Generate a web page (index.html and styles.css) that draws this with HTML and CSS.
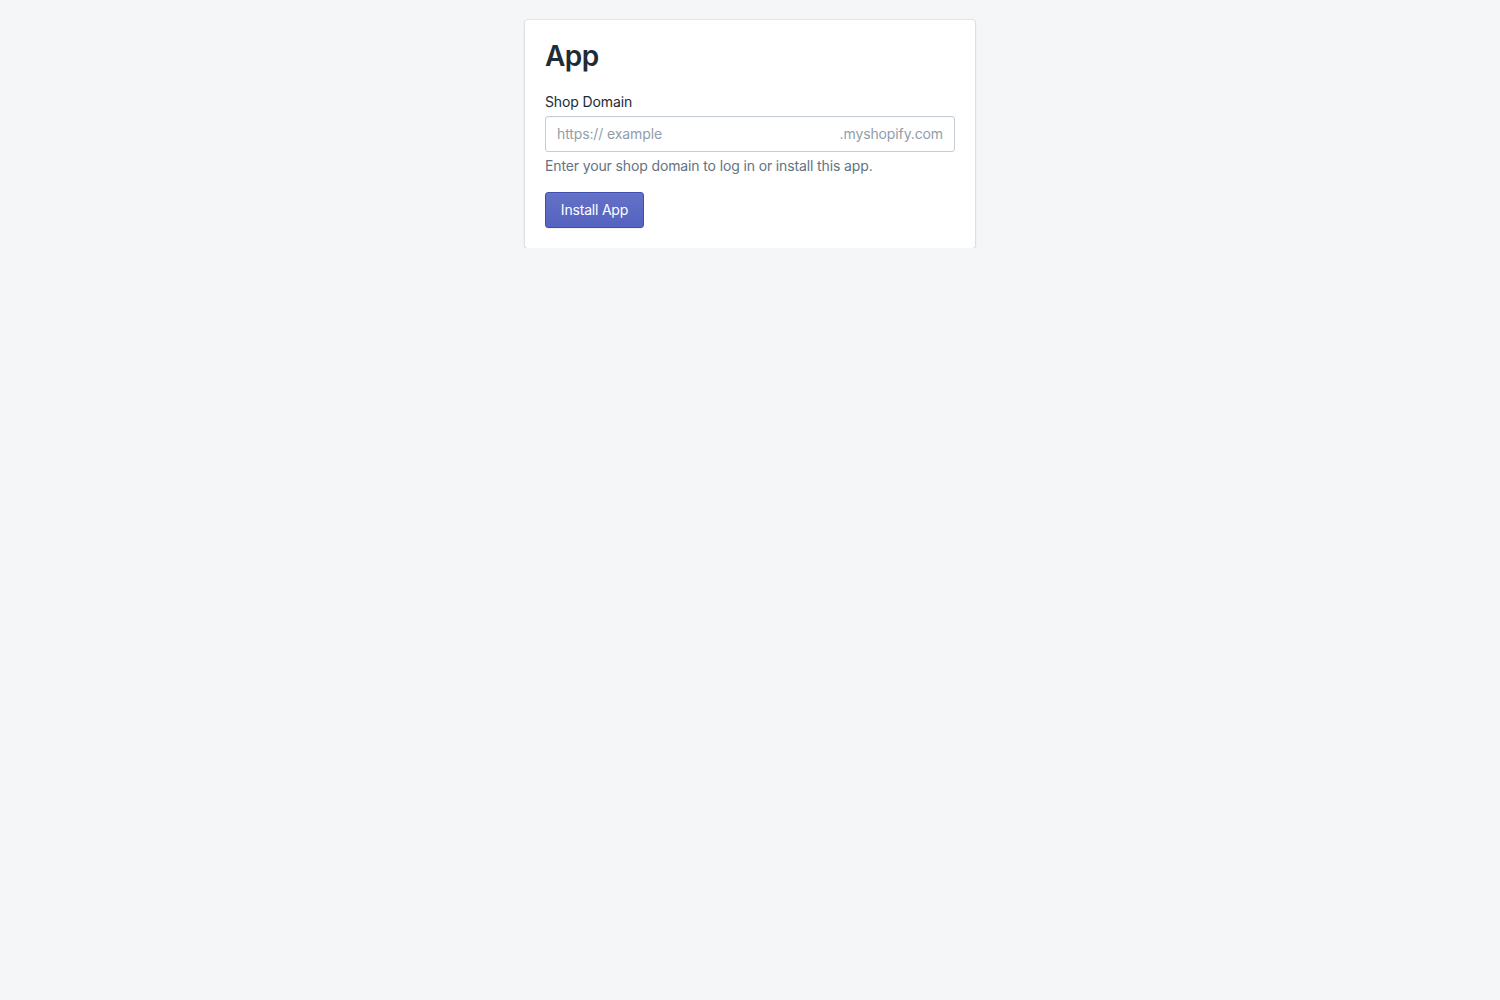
FILE: index.html
```html
<!DOCTYPE html>
<html lang="en">
<head>
<meta charset="utf-8">
<title>App</title>
<link rel="stylesheet" href="styles.css">
</head>
<body>
<main class="page">
  <section class="card">
    <h1 class="title">App</h1>
    <form class="form">
      <label class="label" for="shop">Shop Domain</label>
      <div class="field">
        <input id="shop" class="input" type="text" placeholder="https:// example">
        <span class="suffix">.myshopify.com</span>
      </div>
      <p class="help">Enter your shop domain to log in or install this app.</p>
      <button class="button" type="button">Install App</button>
    </form>
  </section>
</main>
</body>
</html>
```

FILE: styles.css
```css
html, body {
  margin: 0;
  padding: 0;
  background: #f4f6f8;
  font-family: Inter, "Noto Sans", sans-serif;
  color: #212b36;
}

.page {
  display: flex;
  justify-content: center;
  padding-top: 20px;
}

.card {
  box-sizing: border-box;
  width: 450px;
  background: #ffffff;
  border-radius: 3px;
  box-shadow: 0 0 0 1px rgba(63, 63, 68, 0.07), 0 1px 3px 0 rgba(63, 63, 68, 0.15);
  padding: 20px;
}

.title {
  margin: 0;
  font-size: 28px;
  line-height: 32px;
  font-weight: 600;
  letter-spacing: -0.6px;
  color: #212b36;
}

.form {
  display: flex;
  flex-direction: column;
  align-items: flex-start;
  margin-top: 20px;
}

.label {
  font-size: 14px;
  line-height: 20px;
  letter-spacing: -0.12px;
  color: #212b36;
  margin-bottom: 4px;
}

.field {
  box-sizing: border-box;
  width: 100%;
  height: 36px;
  display: flex;
  align-items: center;
  border: 1px solid #c4cdd5;
  border-radius: 3px;
  box-shadow: inset 0 1px 0 0 rgba(99, 115, 129, 0.05);
  padding: 0 11px 2px;
  background: #fff;
}

.input {
  flex: 1;
  min-width: 0;
  border: none;
  outline: none;
  padding: 0;
  font-family: inherit;
  font-size: 14px;
  letter-spacing: -0.12px;
  color: #212b36;
  background: transparent;
}

.input::placeholder {
  color: #919eab;
}

.suffix {
  font-size: 14px;
  letter-spacing: -0.12px;
  color: #919eab;
}

.help {
  margin: 4px 0 0;
  font-size: 14px;
  line-height: 20px;
  letter-spacing: -0.13px;
  color: #637381;
}

.button {
  margin-top: 16px;
  width: 99px;
  height: 36px;
  box-sizing: border-box;
  padding: 0 0 2px;
  text-align: center;
  font-family: inherit;
  font-size: 14px;
  letter-spacing: -0.2px;
  color: #fff;
  background: linear-gradient(180deg, #6371c7, #5563c1);
  border: 1px solid #3f4eae;
  border-radius: 3px;
  box-shadow: inset 0 1px 0 0 #6774c8, 0 1px 0 0 rgba(22, 29, 37, 0.05);
  cursor: pointer;
}
```
